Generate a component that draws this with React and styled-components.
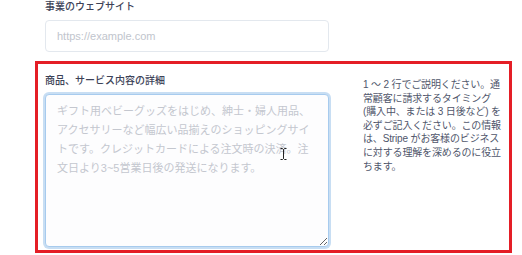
import styled, { createGlobalStyle } from 'styled-components';

const GlobalStyle = createGlobalStyle`
  html, body {
    margin: 0;
    padding: 0;
    background: #ffffff;
  }
  body {
    font-family: "Liberation Sans", "Noto Sans CJK JP", sans-serif;
    color: #3c4257;
  }
`;

const Page = styled.div`
  width: 522px;
  height: 255px;
  overflow: hidden;
  padding: 0 10px 0 35px;
  box-sizing: border-box;
`;

const Field = styled.div`
  display: flex;
  flex-direction: column;
  padding-left: ${(p) => p.inset || 0}px;
`;

const Label = styled.label`
  font-size: 10px;
  line-height: 14px;
  font-weight: 500;
  color: #3c4257;
  margin-bottom: ${(p) => p.gap || 6}px;
`;

const Input = styled.input`
  width: 284px;
  height: 32px;
  box-sizing: border-box;
  border: 1px solid #e3e8ee;
  border-radius: 4px;
  padding: 0 11px;
  font-family: inherit;
  font-size: 11px;
  outline: none;
  &::placeholder {
    color: #c1c5cd;
  }
`;

const Highlight = styled.section`
  margin-top: 9px;
  height: 192px;
  box-sizing: border-box;
  border: 3px solid #e41e26;
  padding: 10px 7px 0 7px;
  display: grid;
  grid-template-columns: 284px 1fr;
  column-gap: 34px;
`;

const TextWrap = styled.div`
  position: relative;
`;

const TextArea = styled.textarea`
  display: block;
  width: 284px;
  height: 153px;
  box-sizing: border-box;
  border: 1px solid #a7cbee;
  border-radius: 4px;
  box-shadow: 0 0 0 2px #c8def3;
  padding: 7px 13px 7px 11px;
  font-family: inherit;
  font-size: 11px;
  line-height: 19px;
  background: #fdfdfe;
  outline: none;
  resize: both;
  &::placeholder {
    color: #c4c7cf;
  }
`;

const Cursor = styled.svg`
  position: absolute;
  left: 235px;
  top: 54px;
  width: 7px;
  height: 12px;
`;

const Help = styled.p`
  margin: 4px 0 0 0;
  font-size: 10px;
  line-height: 13.6px;
  letter-spacing: -0.15px;
  white-space: nowrap;
  color: #4f566b;
`;

export default function App() {
  return (
    <>
      <GlobalStyle />
      <Page>
        <Field inset={10}>
          <Label gap={6}>事業のウェブサイト</Label>
          <Input placeholder="https://example.com" />
        </Field>
        <Highlight>
          <Field>
            <Label gap={6}>商品、サービス内容の詳細</Label>
            <TextWrap>
              <TextArea placeholder="ギフト用ベビーグッズをはじめ、紳士・婦人用品、アクセサリーなど幅広い品揃えのショッピングサイトです。クレジットカードによる注文時の決済。注文日より3~5営業日後の発送になります。" />
              <Cursor viewBox="0 0 7 12">
                <path d="M0.5 0.5h2l1 1 1-1h2M3.5 1.5v9M0.5 11.5h2l1-1 1 1h2" stroke="#222" strokeWidth="1" fill="none" />
              </Cursor>
            </TextWrap>
          </Field>
          <Help>
            1 ～ 2 行でご説明ください。通<br />
            常顧客に請求するタイミング<br />
            (購入中、または 3 日後など) を<br />
            必ずご記入ください。この情報<br />
            は、Stripe がお客様のビジネス<br />
            に対する理解を深めるのに役立<br />
            ちます。
          </Help>
        </Highlight>
      </Page>
    </>
  );
}
